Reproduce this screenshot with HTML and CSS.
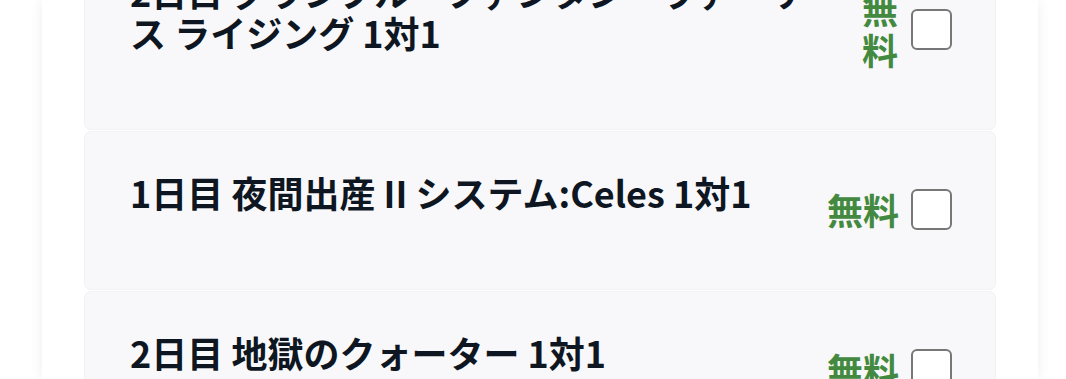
FILE: index.html
```html
<!DOCTYPE html>
<html lang="ja">
<head>
<meta charset="utf-8">
<link rel="stylesheet" href="styles.css">
</head>
<body>
<div class="panel">
  <div class="list">
    <div class="card">
      <div class="title">2日目 グランブルーファンタジーヴァーサス ライジング 1対1</div>
      <div class="side">
        <span class="price">無料</span>
        <span class="check"></span>
      </div>
    </div>
    <div class="card">
      <div class="title">1日目 夜間出産 II システム:Celes 1対1</div>
      <div class="side">
        <span class="price">無料</span>
        <span class="check"></span>
      </div>
    </div>
    <div class="card">
      <div class="title">2日目 地獄のクォーター 1対1</div>
      <div class="side">
        <span class="price">無料</span>
        <span class="check"></span>
      </div>
    </div>
  </div>
</div>
</body>
</html>
```
FILE: styles.css
```css
html, body {
  margin: 0;
  padding: 0;
  background: #ffffff;
  overflow: hidden;
}
body {
  font-family: "Noto Sans CJK JP", "Noto Sans", sans-serif;
  height: 379px;
}
.panel {
  margin: 0 28px 0 42px;
  height: 379px;
  background: #ffffff;
  box-shadow: 0 0 12px rgba(0, 0, 0, 0.07);
  padding: 0 43px;
  overflow: hidden;
}
.list {
  margin-top: -69px;
  display: flex;
  flex-direction: column;
  gap: 3px;
}
.card {
  display: flex;
  align-items: flex-start;
  gap: 24px;
  background: #f8f8fa;
  border-radius: 6px;
  box-shadow: 0 0 0 1px #f2f2f5;
  padding: 41px 43px 59px 45px;
}
.title {
  flex: 1 1 auto;
  font-size: 36px;
  font-weight: 700;
  line-height: 41px;
  color: #0e1622;
  margin-top: -1px;
}
.side {
  flex: 0 1 auto;
  display: flex;
  align-items: center;
  gap: 12px;
  margin-top: 16px;
}
.price {
  font-size: 36px;
  font-weight: 700;
  line-height: 41px;
  color: #438a40;
  min-width: 0;
}
.check {
  flex: 0 0 auto;
  width: 37px;
  height: 37px;
  border: 2.5px solid #777777;
  border-radius: 6px;
  background: #ffffff;
}
```
